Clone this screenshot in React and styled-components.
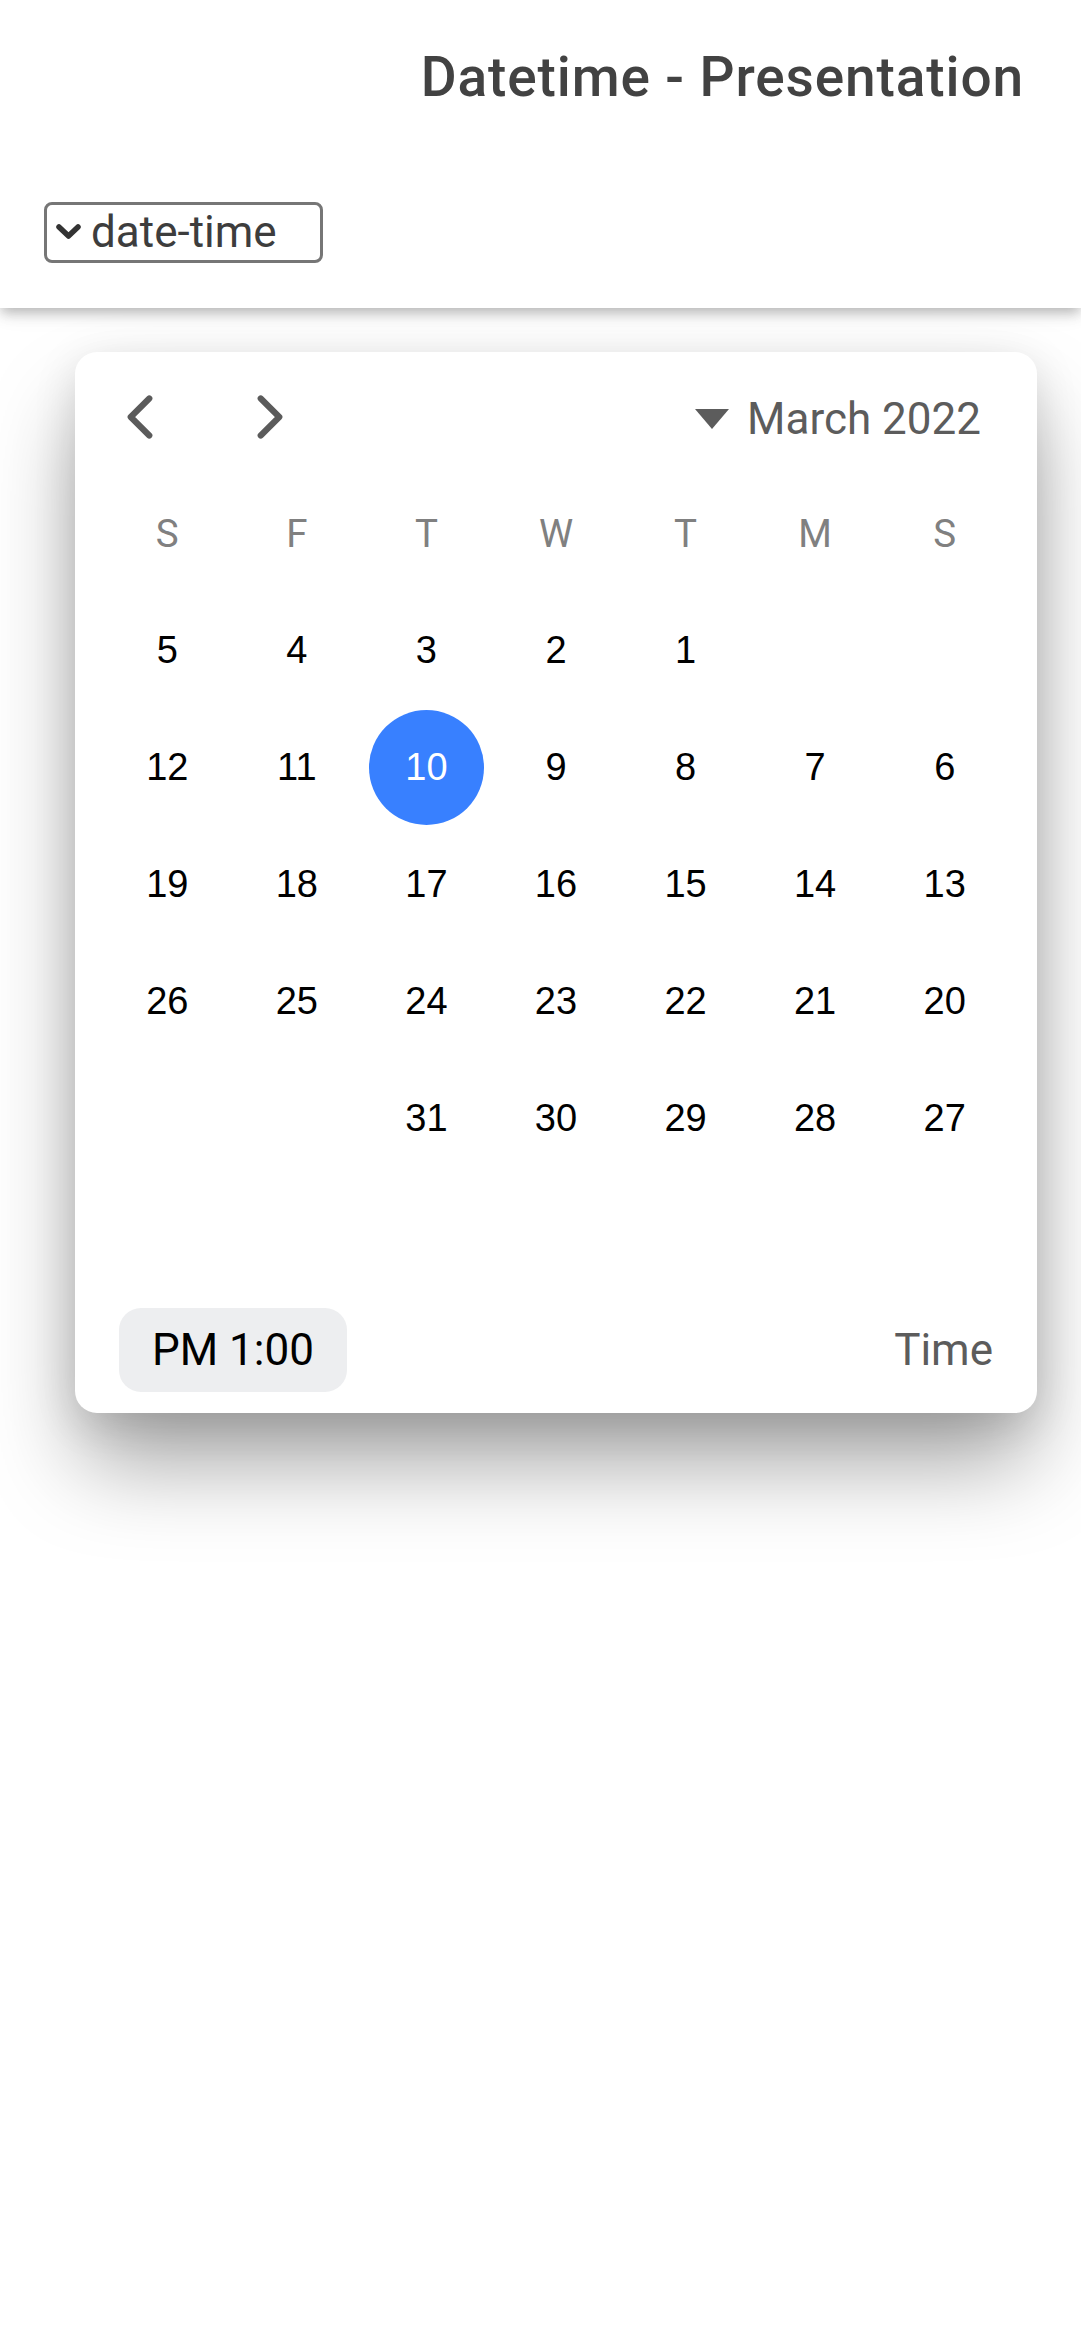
import React from "react";
import styled, { createGlobalStyle } from "styled-components";

const GlobalStyle = createGlobalStyle`
  body {
    margin: 0;
    background: #fff;
    font-family: Roboto, "Noto Sans", sans-serif;
  }
`;

const Page = styled.div`
  min-height: 2340px;
  background: #fff;
`;

const Header = styled.header`
  position: relative;
  z-index: 2;
  background: #fff;
  box-shadow: 0 5px 11px -3px rgba(0, 0, 0, 0.18), 0 8px 12px 0 rgba(0, 0, 0, 0.1),
    0 3px 24px 0 rgba(0, 0, 0, 0.08);
`;

const Toolbar = styled.div`
  height: 154px;
  display: flex;
  align-items: center;
  justify-content: ${p => (p.end ? "flex-end" : "flex-start")};
  padding: 0 57px 0 44px;
  box-sizing: border-box;
`;

const Title = styled.h1`
  margin: 0;
  font-size: 55px;
  font-weight: 500;
  letter-spacing: 0.016em;
  color: #424242;
`;

const SelectBox = styled.div`
  width: 279px;
  height: 61px;
  box-sizing: border-box;
  border: 3px solid #767676;
  border-radius: 8px;
  display: flex;
  align-items: center;
  gap: 9px;
  padding-left: 8px;
  font-size: 44px;
  color: #3d3d3d;
  margin-top: 2px;
`;

const Content = styled.main`
  padding: 44px 0 0 75px;
`;

const Card = styled.div`
  width: 962px;
  height: 1061px;
  box-sizing: border-box;
  background: #fff;
  border-radius: 22px;
  box-shadow: 0 55px 90px -6px rgba(0, 0, 0, 0.36), 0 10px 44px 0 rgba(0, 0, 0, 0.12);
  display: flex;
  flex-direction: column;
`;

const NavRow = styled.div`
  height: 130px;
  display: flex;
  align-items: center;
  padding: 0 56px 0 32px;
`;

const NavButton = styled.div`
  width: 66px;
  height: 66px;
  display: flex;
  margin-right: ${p => p.gap || 0}px;
  svg {
    width: 66px;
    height: 66px;
  }
`;

const MonthLabel = styled.div`
  margin-left: auto;
  display: flex;
  align-items: center;
  gap: 18px;
  font-size: 44px;
  color: #5c5c5c;
  margin-top: 4px;
`;

const WeekRow = styled.div`
  display: grid;
  grid-template-columns: repeat(7, 1fr);
  padding: 22px 27.5px 0;
  height: 58px;
`;

const WeekDay = styled.div`
  display: flex;
  align-items: center;
  justify-content: center;
  font-size: 38.5px;
  color: #808080;
`;

const DayGrid = styled.div`
  display: grid;
  grid-template-columns: repeat(7, 1fr);
  grid-auto-rows: 117px;
  padding: 0 27.5px;
  margin-top: 30px;
`;

const DayCell = styled.div`
  display: flex;
  align-items: center;
  justify-content: center;
  font-family: "Liberation Sans", Arial, sans-serif;
  font-size: 38px;
  color: #000;
`;

const DayNum = styled.span`
  width: 115px;
  height: 115px;
  border-radius: 50%;
  display: flex;
  align-items: center;
  justify-content: center;
  background: ${p => (p.active ? "#3880ff" : "transparent")};
  color: ${p => (p.active ? "#fff" : "#000")};
`;

const TimeRow = styled.div`
  margin-top: auto;
  margin-bottom: 21px;
  display: flex;
  align-items: center;
  justify-content: space-between;
  padding: 0 44px;
`;

const TimeButton = styled.div`
  height: 84px;
  padding: 0 33px;
  border-radius: 22px;
  background: #edeef0;
  color: #000;
  font-size: 44px;
  display: flex;
  align-items: center;
`;

const TimeLabel = styled.div`
  font-size: 44px;
  color: #5c5c5c;
`;

const Chevron = ({ dir }) => (
  <svg viewBox="0 0 512 512">
    <path
      d={dir === "back" ? "M328 112L184 256l144 144" : "M184 112l144 144-144 144"}
      fill="none"
      stroke="#5b5b5b"
      strokeWidth="48"
      strokeLinecap="round"
      strokeLinejoin="round"
    />
  </svg>
);

const weekDays = ["S", "F", "T", "W", "T", "M", "S"];
const rows = [
  [5, 4, 3, 2, 1, null, null],
  [12, 11, 10, 9, 8, 7, 6],
  [19, 18, 17, 16, 15, 14, 13],
  [26, 25, 24, 23, 22, 21, 20],
  [null, null, 31, 30, 29, 28, 27],
  [null, null, null, null, null, null, null],
];

const App = () => {
  return (
    <Page>
      <GlobalStyle />
      <Header>
        <Toolbar end>
          <Title>Datetime - Presentation</Title>
        </Toolbar>
        <Toolbar>
          <SelectBox>
            <svg width="27" height="18" viewBox="0 0 27 18">
              <path d="M4 4l9.5 9L23 4" fill="none" stroke="#333" strokeWidth="5.5" strokeLinecap="round" strokeLinejoin="round" />
            </svg>
            <span>date-time</span>
          </SelectBox>
        </Toolbar>
      </Header>
      <Content>
        <Card>
          <NavRow>
            <NavButton gap={64}>
              <Chevron dir="back" />
            </NavButton>
            <NavButton>
              <Chevron dir="forward" />
            </NavButton>
            <MonthLabel>
              <svg width="34" height="20" viewBox="0 0 34 20">
                <path d="M0 0h34L17 20z" fill="#5c5c5c" />
              </svg>
              <span>March 2022</span>
            </MonthLabel>
          </NavRow>
          <WeekRow>
            {weekDays.map((d, i) => (
              <WeekDay key={i}>{d}</WeekDay>
            ))}
          </WeekRow>
          <DayGrid>
            {rows.flat().map((d, i) => (
              <DayCell key={i}>
                {d ? <DayNum active={d === 10}>{d}</DayNum> : null}
              </DayCell>
            ))}
          </DayGrid>
          <TimeRow>
            <TimeButton>PM 1:00</TimeButton>
            <TimeLabel>Time</TimeLabel>
          </TimeRow>
        </Card>
      </Content>
    </Page>
  );
};

export default App;
